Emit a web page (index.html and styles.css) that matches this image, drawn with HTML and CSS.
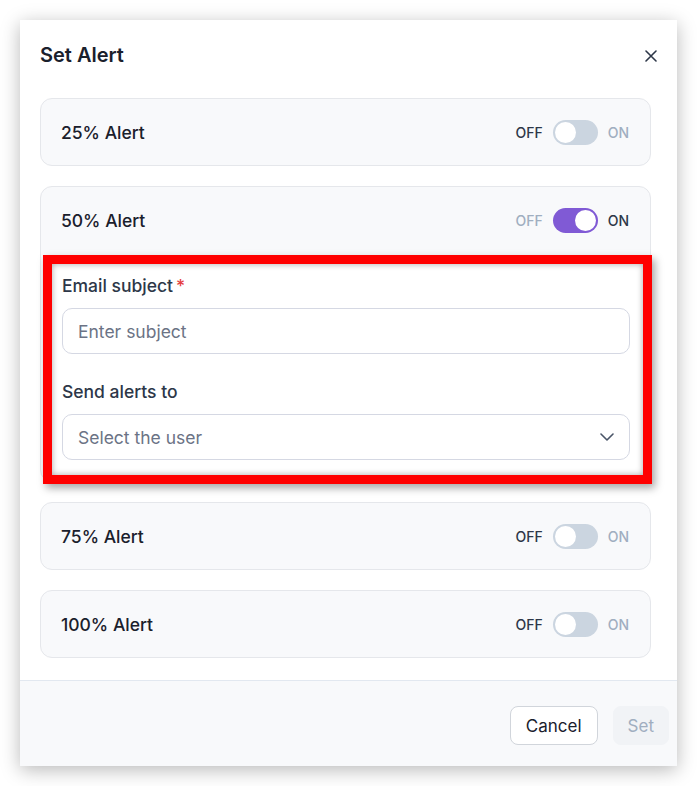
FILE: index.html
```html
<!DOCTYPE html>
<html lang="en">
<head>
  <meta charset="UTF-8" />
  <meta name="viewport" content="width=device-width, initial-scale=1.0"/>
  <title>Set Alert</title>
  <link rel="stylesheet" href="styles.css">
</head>
<body>
  <div class="modal">
    <div class="modal-header">
      <h2>Set Alert</h2>
      <button class="close-btn" aria-label="Close">
        <svg width="12" height="12" viewBox="0 0 12 12">
          <path d="M1 1L11 11M11 1L1 11" stroke="#2d3748" stroke-width="1.6" stroke-linecap="round"/>
        </svg>
      </button>
    </div>

    <div class="modal-body">
      <div class="alert-card">
        <div class="alert-row">
          <span class="alert-name">25% Alert</span>
          <div class="toggle">
            <span class="toggle-label active">OFF</span>
            <span class="switch"></span>
            <span class="toggle-label">ON</span>
          </div>
        </div>
      </div>

      <div class="alert-card">
        <div class="alert-row">
          <span class="alert-name">50% Alert</span>
          <div class="toggle">
            <span class="toggle-label">OFF</span>
            <span class="switch on"></span>
            <span class="toggle-label active">ON</span>
          </div>
        </div>
        <div class="alert-fields">
          <label class="field-label" for="subject">Email subject<span class="required">*</span></label>
          <input id="subject" class="field-input" type="text" placeholder="Enter subject" />
          <label class="field-label second">Send alerts to</label>
          <div class="field-select">
            <span>Select the user</span>
            <svg width="14" height="8" viewBox="0 0 14 8">
              <path d="M1 1L7 7L13 1" fill="none" stroke="#4a5568" stroke-width="1.6" stroke-linecap="round" stroke-linejoin="round"/>
            </svg>
          </div>
        </div>
      </div>

      <div class="alert-card">
        <div class="alert-row">
          <span class="alert-name">75% Alert</span>
          <div class="toggle">
            <span class="toggle-label active">OFF</span>
            <span class="switch"></span>
            <span class="toggle-label">ON</span>
          </div>
        </div>
      </div>

      <div class="alert-card">
        <div class="alert-row">
          <span class="alert-name">100% Alert</span>
          <div class="toggle">
            <span class="toggle-label active">OFF</span>
            <span class="switch"></span>
            <span class="toggle-label">ON</span>
          </div>
        </div>
      </div>
    </div>

    <div class="modal-footer">
      <button class="btn btn-cancel">Cancel</button>
      <button class="btn btn-set" disabled>Set</button>
    </div>
  </div>
</body>
</html>
```

FILE: styles.css
```css
body {
  margin: 0;
  padding: 20px;
  font-family: 'Inter', 'Noto Sans', sans-serif;
  background: white;
  color: #1a202c;
}

.modal {
  width: 657px;
  background: white;
  box-shadow: 0 4px 18px rgba(0, 0, 0, 0.28);
}

.modal-header {
  display: flex;
  align-items: center;
  justify-content: space-between;
  padding: 21px 20px 0 20px;
  height: 28px;
}

.modal-header h2 {
  margin: 0;
  font-size: 20px;
  font-weight: 600;
  line-height: 28px;
  color: #1a202c;
}

.close-btn {
  border: none;
  background: none;
  padding: 0;
  width: 12px;
  height: 12px;
  margin-top: 2px;
  cursor: pointer;
  display: flex;
}

.modal-body {
  display: flex;
  flex-direction: column;
  gap: 20px;
  padding: 29px 26px 22px 20px;
}

.alert-card {
  background: #f8f9fb;
  border: 1px solid #e5e7eb;
  border-radius: 12px;
  padding: 0 20px;
}

.alert-row {
  display: flex;
  align-items: center;
  justify-content: space-between;
  height: 66px;
}

.alert-name {
  font-size: 17.5px;
  font-weight: 500;
  color: #1a202c;
}

.toggle {
  display: flex;
  align-items: center;
  gap: 10px;
  margin-right: 1px;
}

.toggle-label {
  font-size: 14px;
  font-weight: 500;
  color: #a0aec0;
}

.toggle-label.active {
  color: #2d3748;
}

.switch {
  position: relative;
  width: 45px;
  height: 25px;
  border-radius: 13px;
  background: #cbd5e0;
}

.switch::after {
  content: "";
  position: absolute;
  top: 2px;
  left: 2px;
  width: 21px;
  height: 21px;
  border-radius: 50%;
  background: white;
}

.switch.on {
  background: #805ad5;
}

.switch.on::after {
  left: 22px;
}

/* expanded settings, highlighted */
.alert-fields {
  display: flex;
  flex-direction: column;
  margin: 2px -22px -3px -18px;
  padding: 10px 13px 15px 10px;
  background: white;
  border: 9px solid #ff0000;
  box-shadow: inset 0 0 6px rgba(0, 0, 0, 0.35), 3px 4px 8px rgba(0, 0, 0, 0.35);
  position: relative;
}

.field-label {
  font-size: 17.5px;
  font-weight: 500;
  line-height: 24px;
  color: #2d3748;
  margin-bottom: 10px;
}

.field-label.second {
  margin-top: 26px;
}

.required {
  color: #e53e3e;
  margin-left: 3px;
}

.field-input,
.field-select {
  box-sizing: border-box;
  height: 46px;
  width: 100%;
  border: 1px solid #d5d8e3;
  border-radius: 10px;
  padding: 0 15px;
  font-family: inherit;
  font-size: 17.5px;
  color: #1a202c;
  background: white;
  outline: none;
}

.field-input::placeholder {
  color: #6b7385;
}

.field-select {
  display: flex;
  align-items: center;
  justify-content: space-between;
  color: #6b7385;
}

.modal-footer {
  display: flex;
  justify-content: flex-end;
  gap: 15px;
  background: #f8f9fb;
  border-top: 1px solid #e2e8f0;
  padding: 25px 8px 21px 20px;
}

.btn {
  height: 39px;
  padding: 0 15px;
  border-radius: 8px;
  font-family: inherit;
  font-size: 17px;
  font-weight: 400;
  cursor: pointer;
}

.btn-cancel {
  background: white;
  border: 1px solid #d1d5db;
  color: #1a202c;
}

.btn-set {
  padding: 0 14px;
  background: #f1f3f6;
  border: 1px solid #f1f3f6;
  color: #a0aec0;
  cursor: default;
}
```
